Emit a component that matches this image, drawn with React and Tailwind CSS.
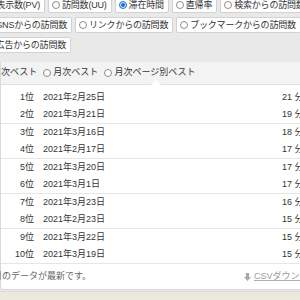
import React from "react"

const rows = [
  ["1位", "2021年2月25日", "21 分 33 秒"],
  ["2位", "2021年3月21日", "19 分 12 秒"],
  ["3位", "2021年3月16日", "18 分 40 秒"],
  ["4位", "2021年2月17日", "17 分 55 秒"],
  ["5位", "2021年3月20日", "17 分 21 秒"],
  ["6位", "2021年3月1日", "17 分 08 秒"],
  ["7位", "2021年3月23日", "16 分 47 秒"],
  ["8位", "2021年2月23日", "15 分 59 秒"],
  ["9位", "2021年3月22日", "15 分 30 秒"],
  ["10位", "2021年3月19日", "15 分 02 秒"],
]

function Radio({ checked }) {
  if (checked) {
    return (
      <span className="w-[8px] h-[8px] rounded-full border border-[#1a73e8] bg-[#dbe8fb] flex items-center justify-center shrink-0">
        <span className="w-[4px] h-[4px] rounded-full bg-[#1a6fd6]" />
      </span>
    )
  }
  return <span className="w-[8px] h-[8px] rounded-full border border-[#8c8c8c] bg-white shrink-0" />
}

function Chip({ label, checked }) {
  return (
    <div className="h-[16px] bg-white border border-[#d2d2d2] rounded-[2px] flex items-center gap-[2px] pl-[3px] pr-[4px] whitespace-nowrap shrink-0">
      <Radio checked={checked} />
      <span className="tracking-[-0.2px]">{label}</span>
    </div>
  )
}

// first chip of each row is cut off by the left edge of the window
function CutChip({ label, w }) {
  return (
    <div className={`h-[16px] bg-white border border-l-0 border-[#d2d2d2] rounded-r-[2px] flex items-center justify-end pr-[4px] whitespace-nowrap shrink-0 ${w}`}>
      <span className="tracking-[-0.2px]">{label}</span>
    </div>
  )
}

function Tab({ label, checked }) {
  return (
    <div className="flex items-center gap-[2px] whitespace-nowrap shrink-0">
      <Radio checked={checked} />
      <span>{label}</span>
    </div>
  )
}

export default function App() {
  return (
    <div className="w-[300px] h-[300px] overflow-hidden flex flex-col bg-[#e9e9e9] text-[9px] leading-none text-[#333] font-['Liberation_Sans','Noto_Sans_CJK_JP',sans-serif]">
      <div className="flex flex-col gap-[4px] -mt-[3px] mb-[9px]">
        <div className="flex gap-[3px]">
          <CutChip label="ページ表示数(PV)" w="w-[45px]" />
          <Chip label="訪問数(UU)" />
          <Chip label="滞在時間" checked />
          <Chip label="直帰率" />
          <Chip label="検索からの訪問数" />
        </div>
        <div className="flex gap-[3px]">
          <CutChip label="SNSからの訪問数" w="w-[72px]" />
          <Chip label="リンクからの訪問数" />
          <Chip label="ブックマークからの訪問数" />
        </div>
        <div className="flex">
          <CutChip label="広告からの訪問数" w="w-[71px]" />
        </div>
      </div>

      <div className="w-[360px] shrink-0 bg-white border-l border-b border-[#dadada] rounded-bl-[4px]">
        <div className="relative h-[23px] bg-[#f3f3f3] border-b border-[#e0e0e0] flex items-center pb-[1px]">
          <div className="-ml-[19px] flex gap-[6px]">
            <Tab label="日次ベスト" checked />
            <Tab label="月次ベスト" />
            <Tab label="月次ページ別ベスト" />
          </div>
          <span className="absolute left-[150px] -bottom-[1px] w-0 h-0 border-x-[5px] border-x-transparent border-b-[5px] border-b-white" />
        </div>

        <div className="pt-[4px]">
          {[0, 2, 4, 6, 8].map(i => (
            <div key={i} className="border-b border-[#e6e6e6]">
              {rows.slice(i, i + 2).map(r => (
                <div key={r[0]} className="h-[17px] flex items-center whitespace-nowrap">
                  <span className="w-[33px] text-right shrink-0">{r[0]}</span>
                  <span className="ml-[9px] w-[239px] shrink-0">{r[1]}</span>
                  <span className="shrink-0">{r[2]}</span>
                </div>
              ))}
            </div>
          ))}
        </div>

        <div className="h-[25px] flex items-center whitespace-nowrap">
          <p className="-ml-[18px] w-[261px] shrink-0 text-[#666]">25日のデータが最新です。</p>
          <a className="flex items-center gap-[3px] text-[#9a9a9a] underline decoration-[#b0b0b0]">
            <svg width="7" height="8" viewBox="0 0 7 8" className="shrink-0">
              <path d="M2 0h3v4h2L3.5 8 0 4h2z" fill="#a8a8a8" />
            </svg>
            CSVダウンロード
          </a>
        </div>
      </div>

      <div className="flex-1 mt-[1px] bg-[#ebe8de] border-t border-[#dedbd0]" />
    </div>
  )
}
